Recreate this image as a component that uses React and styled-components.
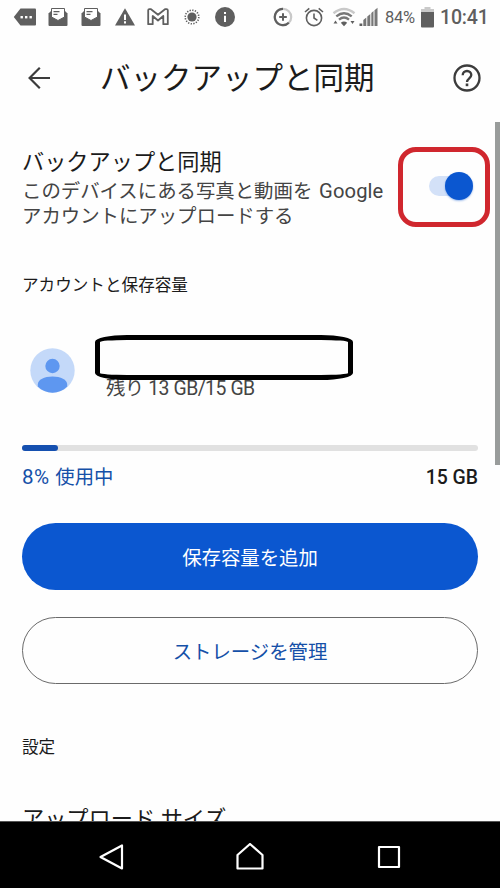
import React, { useState } from 'react';
import styled, { createGlobalStyle } from 'styled-components';

const USED_PERCENT = 8;

const NotificationIcons = () => (
  <Notifications>
    <Slot $width={33.4}>
      <svg width="24" height="20" viewBox="0 0 24 20">
        <path d="M7.5 1.5H22a1 1 0 0 1 1 1v15a1 1 0 0 1-1 1H7.5L.8 10z" fill="#5f5f5f" />
        <g fill="#fff">
          <rect x="7.5" y="9" width="2.4" height="2.4" />
          <rect x="12" y="9" width="2.4" height="2.4" />
          <rect x="16.5" y="9" width="2.4" height="2.4" />
        </g>
      </svg>
    </Slot>
    <Slot $width={33.4}>
      <MailIcon />
    </Slot>
    <Slot $width={33.4}>
      <MailIcon />
    </Slot>
    <Slot $width={33.4}>
      <svg width="22" height="20" viewBox="0 0 22 20">
        <path d="M11 1.2 21 18.6H1z" fill="#5f5f5f" />
        <path d="M10 7.5h2v5.5h-2zM10 14.3h2v2.2h-2z" fill="#fff" />
      </svg>
    </Slot>
    <Slot $width={33.4}>
      <svg width="22" height="18" viewBox="0 0 22 18" fill="none" stroke="#5f5f5f" strokeWidth="1.8">
        <path
          d="M1.2 2.2Q1.2 1.2 2.4 1.2H4l7 5.6 7-5.6h1.6q1.2 0 1.2 1v14h-4.5V8L11 12.5 5.7 8v8.2H1.2z"
          strokeLinejoin="round"
        />
      </svg>
    </Slot>
    <Slot $width={33.4}>
      <svg width="18" height="18" viewBox="0 0 18 18">
        <circle cx="9" cy="9" r="4.6" fill="#5f5f5f" />
        <circle cx="9" cy="9" r="6.8" fill="none" stroke="#5f5f5f" strokeWidth="1.6" strokeDasharray="1.3 1.37" />
      </svg>
    </Slot>
    <Slot $width={33.4}>
      <svg width="20" height="20" viewBox="0 0 20 20">
        <circle cx="10" cy="10" r="10" fill="#5f5f5f" />
        <path d="M9 5h2v2H9zM9 8.7h2V15H9z" fill="#fff" />
      </svg>
    </Slot>
  </Notifications>
);

const MailIcon = () => (
  <svg width="20" height="20" viewBox="0 0 20 20">
    <path d="M.5 6.5 3.5 3.5h13l3 3V18a1 1 0 0 1-1 1h-17a1 1 0 0 1-1-1z" fill="#5f5f5f" />
    <path d="M3.5 1.5h13v8.5L10 13.5 3.5 10z" fill="#fff" stroke="#5f5f5f" strokeWidth="1" />
    <path d="M5.5 4.7h6M5.5 7.3h4" stroke="#5f5f5f" strokeWidth="1.3" />
  </svg>
);

const SystemIcons = () => (
  <System>
    <Slot $width={20}>
      <svg width="20" height="20" viewBox="0 0 20 20" fill="none">
        <circle cx="10" cy="10" r="8.2" stroke="#c9c9c9" strokeWidth="2.2" />
        <path d="M10 1.8a8.2 8.2 0 1 0 5.8 14" stroke="#5f5f5f" strokeWidth="2.2" />
        <path d="M10 6.2v7.6M6.2 10h7.6" stroke="#5f5f5f" strokeWidth="2" />
      </svg>
    </Slot>
    <Slot $width={20} $left={11}>
      <svg width="20" height="20" viewBox="0 0 20 20" fill="none" stroke="#5f5f5f" strokeWidth="1.6">
        <circle cx="10" cy="11" r="7.6" />
        <path d="M1 5 5.3 1.3M19 5l-4.3-3.7M10 6.5V11l3.4 2.4" />
      </svg>
    </Slot>
    <Slot $width={24} $left={8}>
      <svg width="24" height="20" viewBox="0 0 24 20" fill="none" strokeWidth="2.4">
        <path d="M1.5 6.2Q12-2.2 22.5 6.2" stroke="#c9c9c9" />
        <path d="M4.3 9.4Q12 3.2 19.7 9.4" stroke="#777" />
        <path d="M7 12.6q5-4 10 0" stroke="#777" />
        <path d="M8.8 15.7Q12 13.2 15.2 15.7L12 19.3zM1.5 16.5l2-3 2 3zM18.5 14l2 3 2-3z" fill="#5f5f5f" />
      </svg>
    </Slot>
    <Slot $width={19} $left={3}>
      <svg width="19" height="20" viewBox="0 0 19 20">
        <path d="M.5 16.5h2.8V19H.5z" fill="#5f5f5f" />
        <path d="M4.3 13 7.3 10.5V19h-3zM8.3 9.6 11.3 7v12h-3z" fill="#777" />
        <path d="M12.3 6 14.5 4v15h-2.2zM15.5 3.2 18.5.8V19h-3z" fill="#777" />
      </svg>
    </Slot>
    <Percent>84%</Percent>
    <Slot $width={13} $left={4}>
      <svg width="13" height="21" viewBox="0 0 13 21">
        <path d="M3.5 0h6v2H13v4H0V2h3.5z" fill="#c9c9c9" />
        <path d="M0 5h13v14.5a1 1 0 0 1-1 1H1a1 1 0 0 1-1-1z" fill="#5f5f5f" />
      </svg>
    </Slot>
    <Clock>10:41</Clock>
  </System>
);

const App = () => {
  const [backupOn, setBackupOn] = useState(true);

  return (
    <>
      <GlobalStyle />
      <Screen>
        <StatusBar>
          <NotificationIcons />
          <SystemIcons />
        </StatusBar>

        <AppBar>
          <IconButton aria-label="戻る">
            <svg width="24" height="24" viewBox="0 0 24 24" fill="none" stroke="#3c3c3c" strokeWidth="2.2">
              <path d="M23 12H3M12.8 1.8 2.6 12l10.2 10.2" />
            </svg>
          </IconButton>
          <PageTitle>バックアップと同期</PageTitle>
          <IconButton aria-label="ヘルプ">
            <svg width="28" height="28" viewBox="0 0 28 28" fill="none" stroke="#3c3c3c" strokeWidth="2.3">
              <circle cx="14" cy="14" r="12.5" />
              <path d="M9.7 11.2c0-2.4 1.9-4.2 4.3-4.2s4.3 1.8 4.3 4.1c0 3.1-4.3 3.5-4.3 7" />
              <path d="M14 19.5v2.7" strokeWidth="2.6" />
            </svg>
          </IconButton>
        </AppBar>

        <Content>
          <BackupRow>
            <BackupText>
              <ItemTitle>バックアップと同期</ItemTitle>
              <Description>
                このデバイスにある写真と動画を <Brand>Google</Brand>
                <br />
                アカウントにアップロードする
              </Description>
            </BackupText>
            <SwitchFrame>
              <Switch
                role="switch"
                aria-checked={backupOn}
                aria-label="バックアップと同期"
                $on={backupOn}
                onClick={() => setBackupOn(!backupOn)}
              />
            </SwitchFrame>
          </BackupRow>

          <SectionLabel>アカウントと保存容量</SectionLabel>

          <AccountRow>
            <Avatar width="45" height="45" viewBox="0 0 45 45">
              <circle cx="22.5" cy="22.5" r="22.2" fill="#c4d9f9" />
              <circle cx="22.5" cy="18" r="7.2" fill="#5e97f0" />
              <path
                d="M7.8 36.5c0-5 6.5-8 14.7-8s14.7 3 14.7 8v2c-3.9 4-9 6.2-14.7 6.2S11.7 42.5 7.8 38.5z"
                fill="#5e97f0"
              />
            </Avatar>
            <AccountInfo>
              <Remaining>残り 13 GB/15 GB</Remaining>
              <HiddenName />
            </AccountInfo>
          </AccountRow>

          <Meter>
            <MeterFill style={{ width: `${USED_PERCENT}%` }} />
          </Meter>
          <UsageRow>
            <Used>
              <UsedValue>{USED_PERCENT}%</UsedValue> 使用中
            </Used>
            <Total>15 GB</Total>
          </UsageRow>

          <PillButton $primary>保存容量を追加</PillButton>
          <PillButton>ストレージを管理</PillButton>

          <SettingsLabel>設定</SettingsLabel>
          <ItemTitle>アップロード サイズ</ItemTitle>
        </Content>
        <ScrollThumb />

        <NavBar>
          <NavButton aria-label="戻る">
            <svg width="28" height="28" viewBox="0 0 28 28">
              <path d="M25 2.5v23L3.5 14z" />
            </svg>
          </NavButton>
          <NavButton aria-label="ホーム">
            <svg width="28" height="28" viewBox="0 0 28 28">
              <path d="M14 1 26.5 12v13.5h-25V12z" />
            </svg>
          </NavButton>
          <NavButton aria-label="履歴">
            <svg width="28" height="28" viewBox="0 0 28 28">
              <path d="M4 4h20v20H4z" />
            </svg>
          </NavButton>
        </NavBar>
      </Screen>
    </>
  );
};

const GlobalStyle = createGlobalStyle`
  * {
    box-sizing: border-box;
  }

  body {
    margin: 0;
    background: #fefefe;
    font-family: Roboto, 'Noto Sans CJK JP', sans-serif;
    color: #1b1b1b;
  }

  button {
    padding: 0;
    border: none;
    background: none;
    font-family: inherit;
    cursor: pointer;
  }

  svg {
    display: block;
    flex-shrink: 0;
  }
`;

const Screen = styled.div`
  position: relative;
  display: flex;
  flex-direction: column;
  width: 500px;
  height: 888px;
  overflow: hidden;
`;

const StatusBar = styled.div`
  display: flex;
  justify-content: space-between;
  height: 34px;
  padding: 0 12px 0 8px;
  color: #5f5f5f;
`;

const Notifications = styled.div`
  display: flex;
  align-items: center;
`;

const System = styled.div`
  display: flex;
  align-items: center;
`;

const Slot = styled.div`
  display: flex;
  justify-content: center;
  flex-shrink: 0;
  width: ${({ $width }) => $width}px;
  margin-left: ${({ $left }) => $left || 0}px;
`;

const Percent = styled.span`
  width: 32px;
  margin-left: 7px;
  font-size: 16.5px;
  letter-spacing: -0.3px;
`;

const Clock = styled.span`
  width: 48px;
  margin-left: 6px;
  font-size: 19.6px;
  font-weight: 500;
  letter-spacing: -0.2px;
  white-space: nowrap;
`;

const AppBar = styled.header`
  display: flex;
  align-items: center;
  height: 88px;
  padding: 0 19px 0 27px;
`;

const IconButton = styled.button`
  flex-shrink: 0;
`;

const PageTitle = styled.h1`
  flex: 1;
  margin: 2px 0 0 49px;
  font-size: 30.5px;
  font-weight: 400;
  line-height: 44px;
  white-space: nowrap;
`;

const Content = styled.main`
  display: flex;
  flex: 1;
  flex-direction: column;
  min-height: 0;
  padding: 24px 22px 0;
  overflow: hidden;
`;

const BackupRow = styled.div`
  display: flex;
  justify-content: space-between;
  height: 82px;
  margin-right: -12px;
`;

const BackupText = styled.div`
  padding-top: 1px;
  white-space: nowrap;
`;

const ItemTitle = styled.h2`
  flex-shrink: 0;
  margin: 0;
  font-size: 22.2px;
  font-weight: 400;
  line-height: 30px;
`;

const Description = styled.p`
  margin: 3px 0 0;
  font-size: 19.4px;
  line-height: 24.5px;
  color: #444;
`;

const Brand = styled.span`
  margin-left: 2px;
  font-size: 20.2px;
  line-height: 1;
  letter-spacing: 0.1px;
`;

const SwitchFrame = styled.div`
  display: flex;
  align-items: center;
  width: 92px;
  height: 80px;
  margin-top: 1px;
  padding: 0 12px 2px 26px;
  border: 5px solid #d0272e;
  border-radius: 18px;
`;

const Switch = styled.button`
  display: flex;
  align-items: center;
  justify-content: ${({ $on }) => ($on ? 'flex-end' : 'flex-start')};
  width: 40px;
  height: 20px;
  border-radius: 10px;
  background: ${({ $on }) => ($on ? '#d3e1f8' : '#ccc')};

  &::before {
    content: '';
    flex-shrink: 0;
    width: 28px;
    height: 28px;
    margin-right: -4px;
    border-radius: 50%;
    background: ${({ $on }) => ($on ? '#0b57d0' : '#fff')};
    box-shadow: 0 1px 2px rgba(11, 87, 208, 0.4);
  }
`;

const SectionLabel = styled.h3`
  margin: 46px 0 0;
  font-size: 16.6px;
  font-weight: 400;
  line-height: 24px;
`;

const AccountRow = styled.div`
  display: flex;
  align-items: center;
  height: 70px;
  margin-top: 37px;
  padding-left: 8px;
`;

const Avatar = styled.svg`
  margin-top: 4px;
`;

const AccountInfo = styled.div`
  position: relative;
  align-self: stretch;
  flex: 1;
  padding: 42px 0 0 31px;
`;

const Remaining = styled.div`
  font-size: 19.4px;
  line-height: 24px;
  letter-spacing: -0.6px;
  word-spacing: 0.5px;
  color: #444;
`;

const HiddenName = styled.div`
  position: absolute;
  top: 0;
  left: 20px;
  width: 258px;
  height: 45px;
  border: 5px solid #000;
  border-radius: 32px / 7px;
  background: #fefefe;
`;

const Meter = styled.div`
  flex-shrink: 0;
  height: 6px;
  margin-top: 44px;
  border-radius: 3px;
  background: #e1e1e1;
`;

const MeterFill = styled.div`
  height: 100%;
  border-radius: 3px;
  background: #1550b0;
`;

const UsageRow = styled.div`
  display: flex;
  justify-content: space-between;
  margin-top: 15px;
  font-size: 19.4px;
  line-height: 24px;
`;

const Used = styled.span`
  color: #1550a8;
`;

const UsedValue = styled.span`
  margin-right: 1px;
  font-size: 20.6px;
  line-height: 1;
  letter-spacing: 0.4px;
`;

const Total = styled.span`
  font-weight: 500;
`;

const PillButton = styled.button`
  flex-shrink: 0;
  height: 67px;
  margin-top: ${({ $primary }) => ($primary ? 33 : 27)}px;
  border: ${({ $primary }) => ($primary ? 'none' : '1px solid #6a6a6a')};
  border-radius: 34px;
  background: ${({ $primary }) => ($primary ? '#0b57d0' : '#fefefe')};
  color: ${({ $primary }) => ($primary ? '#fff' : '#1550a8')};
  font-size: 19.4px;
`;

const SettingsLabel = styled(SectionLabel)`
  margin: 52px 0 44px;
`;

const ScrollThumb = styled.div`
  position: absolute;
  top: 122px;
  right: 0;
  width: 5px;
  height: 343px;
  background: #999c9b;
`;

const NavBar = styled.nav`
  display: flex;
  justify-content: center;
  gap: 111px;
  flex-shrink: 0;
  height: 67px;
  padding-top: 3px;
  border-top: 1px solid #555;
  background: #000;
`;

const NavButton = styled.button`
  path {
    fill: none;
    stroke: #fff;
    stroke-width: 2.2;
    stroke-linejoin: round;
  }
`;

export default App;
